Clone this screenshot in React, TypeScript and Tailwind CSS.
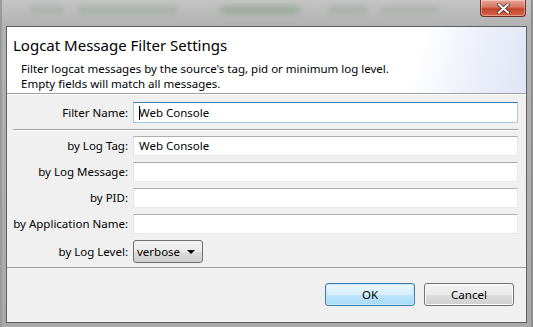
import React from "react";

const font = { fontFamily: '"Noto Sans", "Open Sans", sans-serif' };

function Field({ value, focused }: { value?: string; focused?: boolean }) {
  return (
    <div
      className={
        focused
          ? "h-[21px] bg-white border border-[#a4c9e3] border-t-[#3d7bad] flex items-center pl-[5px] text-[11.5px] text-black whitespace-nowrap"
          : "h-[20px] bg-white border border-[#e3e9ef] border-t-[#abadb3] border-l-[#e2e3ea] flex items-center pl-[5px] text-[11.5px] text-black whitespace-nowrap"
      }
    >
      {focused && <span className="w-px h-[14px] bg-black -mr-px" />}
      {value}
    </div>
  );
}

function Label({ children }: { children: React.ReactNode }) {
  return <div className="text-right text-[11.5px] text-black leading-none whitespace-nowrap">{children}</div>;
}

export default function App() {
  return (
    <div className="w-[533px] h-[327px] relative overflow-hidden bg-[linear-gradient(180deg,#c4c4c4_0%,#b2b2b2_8%,#a9a9a9_100%)]" style={font}>
      {/* blurred background behind the glass title bar */}
      <div className="absolute left-[30px] top-[7px] w-[34px] h-[6px] rounded bg-[#94a394] blur-[3px] opacity-50" />
      <div className="absolute left-[78px] top-[7px] w-[100px] h-[6px] rounded bg-[#86a086] blur-[3px] opacity-50" />
      <div className="absolute left-[220px] top-[7px] w-[80px] h-[6px] rounded bg-[#789478] blur-[3px] opacity-60" />
      <div className="absolute left-[328px] top-[7px] w-[40px] h-[6px] rounded bg-[#8e9e8e] blur-[3px] opacity-50" />
      <div className="absolute left-[380px] top-[7px] w-[60px] h-[6px] rounded bg-[#8e9e8e] blur-[3px] opacity-40" />
      <div className="absolute left-0 top-0 bottom-0 w-[2px] bg-[#9a9a9a]" />
      <div className="absolute right-0 top-0 bottom-0 w-[2px] bg-[#8e8e8e]" />

      {/* close button */}
      <div className="absolute left-[480px] top-0 w-[46px] h-[17px] rounded-b-[4px] border border-t-0 border-[#6d3026] bg-[linear-gradient(180deg,#e9a898_0%,#d4735f_45%,#c2432c_55%,#d7664c_100%)] flex items-center justify-center shadow-[inset_0_0_0_1px_rgba(255,255,255,0.35)]">
        <svg width="13" height="11" viewBox="0 0 13 11">
          <path d="M2 1.5 L11 9.5 M11 1.5 L2 9.5" stroke="#4a2a26" strokeWidth="3.6" strokeLinecap="square" />
          <path d="M2 1.5 L11 9.5 M11 1.5 L2 9.5" stroke="#ffffff" strokeWidth="2" strokeLinecap="square" />
        </svg>
      </div>

      {/* client area */}
      <div className="absolute left-[6px] top-[26px] w-[521px] h-[297px] border border-[#5f5f5f] bg-[#f0f0f0] flex flex-col">
        {/* header */}
        <div className="h-[67px] relative bg-[linear-gradient(105deg,#ffffff_0%,#ffffff_78%,#eef1fa_88%,#dfe5f6_100%)] border-b border-[#a0a0a0] pl-[6px] pt-[9px]">
          <div className="text-[15px] leading-[19px] text-black">Logcat Message Filter Settings</div>
          <div className="pl-[8px] pt-[6px] text-[11.5px] leading-[15px] text-black">
            <div>Filter logcat messages by the source's tag, pid or minimum log level.</div>
            <div>Empty fields will match all messages.</div>
          </div>
        </div>

        {/* body */}
        <div className="flex-1 border-t border-white pl-[6px] pr-[8px] pt-[7px] border-b border-b-[#a0a0a0]">
          <div className="grid grid-cols-[115px_1fr] gap-x-[5px] items-center">
            <Label>Filter Name:</Label>
            <Field value="Web Console" focused />
          </div>
          <div className="h-[2px] mt-[6px] mb-[5px] border-t border-[#a0a0a0] border-b border-b-white" />
          <div className="grid grid-cols-[115px_1fr] gap-x-[5px] gap-y-[6px] items-center">
            <Label>by Log Tag:</Label>
            <Field value="Web Console" />
            <Label>by Log Message:</Label>
            <Field />
            <Label>by PID:</Label>
            <Field />
            <Label>by Application Name:</Label>
            <Field />
            <Label>by Log Level:</Label>
            <div>
              <div className="w-[70px] h-[23px] rounded-[3px] border border-[#707070] bg-[linear-gradient(180deg,#f2f2f2_0%,#ebebeb_50%,#dddddd_51%,#cfcfcf_100%)] flex items-center justify-between pl-[3px] pr-[7px] text-[11.5px] text-black">
                <span>verbose</span>
                <svg width="8" height="4" viewBox="0 0 8 4">
                  <path d="M0 0 H8 L4 4 Z" fill="#000" />
                </svg>
              </div>
            </div>
          </div>
        </div>

        {/* footer */}
        <div className="h-[54px] flex justify-end items-start pt-[15px] pr-[12px] gap-[9px]">
          <button className="w-[90px] h-[23px] rounded-[3px] border border-[#3c7fb1] bg-[linear-gradient(180deg,#eaf6fd_0%,#d9f0fc_50%,#bee6fd_51%,#a7d9f5_100%)] shadow-[inset_0_0_0_1px_#c6e6f8] text-[11.5px] text-black">
            OK
          </button>
          <button className="w-[90px] h-[23px] rounded-[3px] border border-[#707070] bg-[linear-gradient(180deg,#f2f2f2_0%,#ebebeb_50%,#dddddd_51%,#cfcfcf_100%)] shadow-[inset_0_0_0_1px_#fcfcfc] text-[11.5px] text-black">
            Cancel
          </button>
        </div>
      </div>
    </div>
  );
}
